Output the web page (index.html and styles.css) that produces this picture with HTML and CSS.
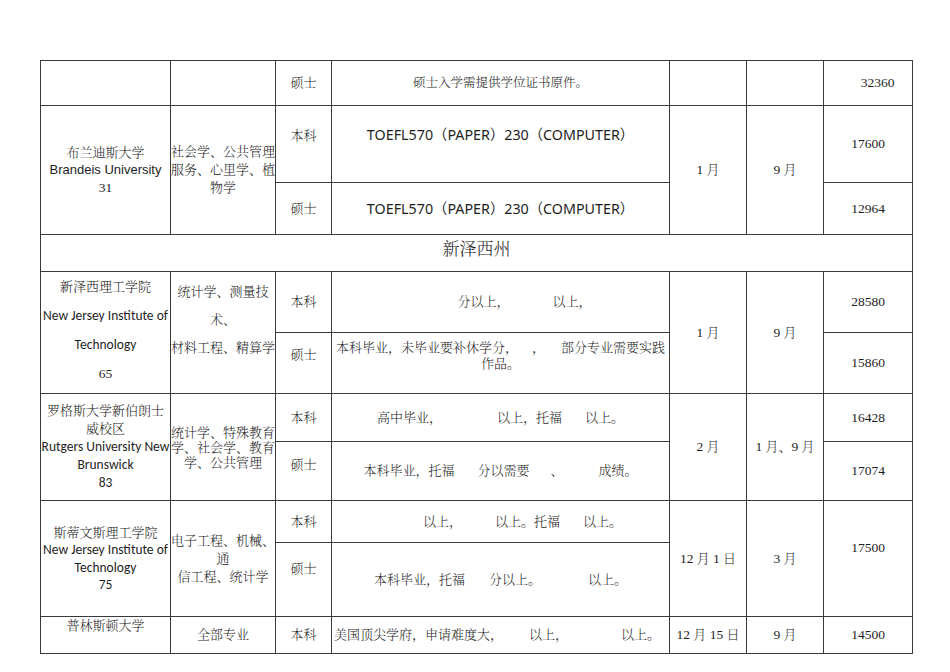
FILE: index.html
```html
<!DOCTYPE html>
<html lang="zh-CN">
<head>
<meta charset="utf-8">
<title>留学院校</title>
<link rel="stylesheet" href="styles.css">
</head>
<body>
<div class="page">
<table class="grid">
  <colgroup>
    <col class="c-school"><col class="c-major"><col class="c-deg"><col class="c-req"><col class="c-dead"><col class="c-start"><col class="c-fee">
  </colgroup>
  <tr class="h45">
    <td></td>
    <td></td>
    <td class="cjk">硕士</td>
    <td class="cjk sm">硕士入学需提供学位证书原件。</td>
    <td></td>
    <td></td>
    <td class="num fee-shift">32360</td>
  </tr>
  <tr class="h77">
    <td rowspan="2" class="school lh17">布兰迪斯大学<br><span class="arial">Brandeis University</span><br><span class="num">31</span></td>
    <td rowspan="2" class="major lh18">社会学、公共管理服务、心里学、植物学</td>
    <td class="cjk top pt22">本科</td>
    <td class="toefl top pt21">TOEFL570（PAPER）230（COMPUTER）</td>
    <td rowspan="2" class="mon"><span class="num">1</span> 月</td>
    <td rowspan="2" class="mon"><span class="num">9</span> 月</td>
    <td class="num">17600</td>
  </tr>
  <tr class="h52">
    <td class="cjk">硕士</td>
    <td class="toefl">TOEFL570（PAPER）230（COMPUTER）</td>
    <td class="num">12964</td>
  </tr>
  <tr class="h37">
    <td colspan="7" class="section">新泽西州</td>
  </tr>
  <tr class="h61">
    <td rowspan="2" class="school top lh29">新泽西理工学院<br><span class="cal">New Jersey Institute of</span><br><span class="cal">Technology</span><br><span class="num">65</span></td>
    <td rowspan="2" class="major top pt6 lh28">统计学、测量技<br>术、<br>材料工程、精算学</td>
    <td class="cjk">本科</td>
    <td class="cjk pl48">分以上，<span class="gap w43"></span>以上，</td>
    <td rowspan="2" class="mon"><span class="num">1</span> 月</td>
    <td rowspan="2" class="mon"><span class="num">9</span> 月</td>
    <td class="num">28580</td>
  </tr>
  <tr class="h61">
    <td class="cjk top pt14">硕士</td>
    <td class="cjk top pt7 lh16">本科毕业，未毕业要补休学分，<span class="gap w14"></span>，<span class="gap w16"></span>部分专业需要实践<br>作品。</td>
    <td class="num">15860</td>
  </tr>
  <tr class="h48">
    <td rowspan="2" class="school lh18">罗格斯大学新伯朗士<br>威校区<br><span class="cal">Rutgers University New</span><br><span class="cal">Brunswick</span><br><span class="cal">83</span></td>
    <td rowspan="2" class="major lh15">统计学、特殊教育学、社会学、教育学、公共管理</td>
    <td class="cjk">本科</td>
    <td class="cjk">高中毕业，<span class="gap w55"></span>以上，托福<span class="gap w23"></span>以上。</td>
    <td rowspan="2" class="mon"><span class="num">2</span> 月</td>
    <td rowspan="2" class="mon"><span class="num">1</span> 月、<span class="num">9</span> 月</td>
    <td class="num">16428</td>
  </tr>
  <tr class="h59">
    <td class="cjk top pt15">硕士</td>
    <td class="cjk">本科毕业，托福<span class="gap w23"></span>分以需要<span class="gap w21"></span>、<span class="gap w35"></span>成绩。</td>
    <td class="num">17074</td>
  </tr>
  <tr class="h42">
    <td rowspan="2" class="school lh17">斯蒂文斯理工学院<br><span class="cal">New Jersey Institute of</span><br><span class="cal">Technology</span><br><span class="cal">75</span></td>
    <td rowspan="2" class="major lh18">电子工程、机械、<br>通<br>信工程、统计学</td>
    <td class="cjk">本科</td>
    <td class="cjk pl44">以上，<span class="gap w33"></span>以上。托福<span class="gap w23"></span>以上。</td>
    <td rowspan="2" class="mon"><span class="num">12</span> 月 <span class="num">1</span> 日</td>
    <td rowspan="2" class="mon"><span class="num">3</span> 月</td>
    <td rowspan="2" class="num top pt39">17500</td>
  </tr>
  <tr class="h74">
    <td class="cjk top pt18">硕士</td>
    <td class="cjk">本科毕业，托福<span class="gap w24"></span>分以上。<span class="gap w47"></span>以上。</td>
  </tr>
  <tr class="h37">
    <td class="school top pt1">普林斯顿大学</td>
    <td class="cjk">全部专业</td>
    <td class="cjk">本科</td>
    <td class="cjk left">美国顶尖学府，申请难度大，<span class="gap w26"></span>以上，<span class="gap w53"></span>以上。</td>
    <td class="mon"><span class="num">12</span> 月 <span class="num">15</span> 日</td>
    <td class="mon"><span class="num">9</span> 月</td>
    <td class="num">14500</td>
  </tr>
</table>
</div>
</body>
</html>
```

FILE: styles.css
```css
html, body {
  margin: 0;
  padding: 0;
  background: #ffffff;
}

.page {
  padding: 60px 0 0 40px;
}

.grid {
  border-collapse: collapse;
  table-layout: fixed;
  width: 872px;
  color: #1e1e1e;
  font-family: "Liberation Serif", "Noto Serif CJK SC", "Noto Sans CJK SC", serif;
  font-size: 13px;
  font-weight: 300;
  line-height: 16px;
}

.grid td {
  border: 1px solid #3a3a3a;
  padding: 0;
  text-align: center;
  vertical-align: middle;
  overflow: visible;
  white-space: nowrap;
}

.c-school { width: 130px; }
.c-major { width: 105px; }
.c-deg { width: 56px; }
.c-req { width: 338px; }
.c-dead { width: 77px; }
.c-start { width: 77px; }
.c-fee { width: 89px; }

.h45 { height: 45px; }
.h77 { height: 77px; }
.h52 { height: 52px; }
.h37 { height: 37px; }
.h61 { height: 61px; }
.h48 { height: 48px; }
.h59 { height: 59px; }
.h42 { height: 42px; }
.h74 { height: 74px; }

.grid td.top { vertical-align: top; }
.grid td.left { text-align: left; padding-left: 2px; }

.pt1 { padding-top: 1px !important; }
.pt6 { padding-top: 6px !important; }
.pt7 { padding-top: 7px !important; }
.pt14 { padding-top: 14px !important; }
.pt15 { padding-top: 15px !important; }
.pt18 { padding-top: 18px !important; }
.pt21 { padding-top: 21px !important; }
.pt22 { padding-top: 22px !important; }
.pt39 { padding-top: 39px !important; }
.pl44 { padding-left: 44px !important; }
.pl48 { padding-left: 48px !important; }

.lh15 { line-height: 15px; }
.lh16 { line-height: 16px; }
.lh17 { line-height: 17.5px; }
.lh18 { line-height: 18px; }
.lh28 { line-height: 28px; }
.lh29 { line-height: 29px; }

.sm { font-size: 12.5px; }

.num {
  font-family: "Liberation Serif", serif;
  font-size: 13.5px;
  font-weight: 400;
}

.fee-shift { padding-left: 19px !important; }

.arial {
  font-family: "Liberation Sans", Arial, sans-serif;
  font-size: 13px;
  font-weight: 400;
}

.cal {
  font-family: "Carlito", "Lato", "Open Sans", sans-serif;
  font-size: 13.5px;
  font-weight: 400;
}

.grid td.major {
  white-space: normal;
  word-break: break-all;
}

.toefl {
  font-family: "Noto Sans", "Noto Sans CJK SC", sans-serif;
  font-size: 14.3px;
  font-weight: 400;
}

.section {
  font-size: 17px;
  padding-bottom: 6px !important;
}

.gap {
  display: inline-block;
  height: 1px;
}
.w14 { width: 14px; }
.w16 { width: 16px; }
.w21 { width: 21px; }
.w23 { width: 23px; }
.w24 { width: 24px; }
.w26 { width: 26px; }
.w33 { width: 33px; }
.w35 { width: 35px; }
.w43 { width: 43px; }
.w47 { width: 47px; }
.w53 { width: 53px; }
.w55 { width: 55px; }
```
